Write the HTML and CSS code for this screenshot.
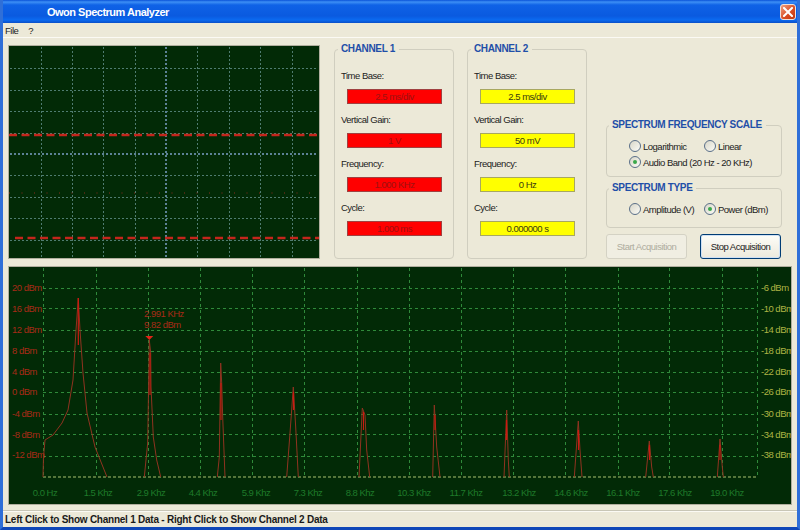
FILE: index.html
```html
<!DOCTYPE html>
<html lang="en">
<head>
    <meta charset="UTF-8">
    <title>Owon Spectrum Analyzer</title>
    <link rel="stylesheet" href="styles.css">
</head>
<body>
    <div class="window">
        <div class="titlebar">
            <span class="title">Owon Spectrum Analyzer</span>
            <div class="close-btn">
                <svg width="10" height="10" viewBox="0 0 10 10"><path d="M1 1 L9 9 M9 1 L1 9" stroke="#fff" stroke-width="2" stroke-linecap="square"/></svg>
            </div>
        </div>
        <div class="menubar"><span>File</span><span>?</span></div>

        <div class="main">
            <div class="top-row">
                <svg class="scope" width="312" height="214" viewBox="8 45 312 214">
                    <rect x="8" y="45" width="312" height="214" fill="#022a06"/>
                    <g class="scope-grid">
                        <path d="M41.500 47V257 M72.500 47V257 M103.500 47V257 M135.500 47V257 M197.500 47V257 M229.500 47V257 M260.500 47V257 M292.500 47V257"/>
                        <path d="M10 68.500H318 M10 90.500H318 M10 111.500H318 M10 133.500H318 M10 175.500H318 M10 197.500H318 M10 218.500H318 M10 240.500H318"/>
                    </g>
                    <path class="scope-axis" d="M166 47V257 M10 154H318"/>
                    <path class="trace" d="M9 135H318"/>
                    <path class="trace-dots" d="M9 193H318"/>
                    <path class="trace" d="M15 238H320"/>
                </svg>

                <div class="group channel">
                    <span class="legend">CHANNEL 1</span>
                    <div class="field"><label>Time Base:</label><div class="value red">2.5 ms/div</div></div>
                    <div class="field"><label>Vertical Gain:</label><div class="value red">1 V</div></div>
                    <div class="field"><label>Frequency:</label><div class="value red">1.000 KHz</div></div>
                    <div class="field"><label>Cycle:</label><div class="value red">1.000 ms</div></div>
                </div>

                <div class="group channel">
                    <span class="legend">CHANNEL 2</span>
                    <div class="field"><label>Time Base:</label><div class="value yellow">2.5 ms/div</div></div>
                    <div class="field"><label>Vertical Gain:</label><div class="value yellow">50 mV</div></div>
                    <div class="field"><label>Frequency:</label><div class="value yellow">0 Hz</div></div>
                    <div class="field"><label>Cycle:</label><div class="value yellow">0.000000 s</div></div>
                </div>

                <div class="side">
                    <div class="group options scale">
                        <span class="legend">SPECTRUM FREQUENCY SCALE</span>
                        <div class="opt"><i class="radio"></i>Logarithmic</div>
                        <div class="opt"><i class="radio"></i>Linear</div>
                        <div class="opt wide"><i class="radio on"></i>Audio Band (20 Hz - 20 KHz)</div>
                    </div>
                    <div class="group options type">
                        <span class="legend">SPECTRUM TYPE</span>
                        <div class="opt"><i class="radio"></i>Amplitude (V)</div>
                        <div class="opt"><i class="radio on"></i>Power (dBm)</div>
                    </div>
                    <div class="buttons">
                        <button disabled>Start Acquisition</button>
                        <button class="active">Stop Acquisition</button>
                    </div>
                </div>
            </div>

            <svg class="spectrum" width="784" height="239" viewBox="8 266 784 239">
                <rect x="8" y="266" width="784" height="239" fill="#022a06"/>
                <g class="spec-grid">
                    <path d="M43.500 268V477 M96.500 268V477 M148.500 268V477 M200.500 268V477 M252.500 268V477 M304.500 268V477 M357.500 268V477 M409.500 268V477 M461.500 268V477 M513.500 268V477 M565.500 268V477 M618.500 268V477 M669.500 268V477 M722.500 268V477 M757.500 268V477"/>
                    <path d="M43 288.500H757 M43 308.500H757 M43 330.500H757 M43 351.500H757 M43 372.500H757 M43 392.500H757 M43 414.500H757 M43 434.500H757 M43 456.500H757"/>
                </g>
                <path class="baseline" d="M43 477H757"/>

                <g class="peaks">
                    <path d="M43 477L43.500 457L45 440L53 435L62 423L68 410L73 380L76 330L78.300 298L80 330L83 373L87 413L95 447L107 477"/>
                    <path d="M144.300 477L147.700 443L149.300 340L150.700 353L151 387L153.300 437L156.700 460L160.700 477"/>
                    <path d="M217.300 477L219.300 457L220.700 363L221.700 383L222.700 417L225 477"/>
                    <path d="M286.700 477L290 433L293.300 387L295.700 427L298.300 477"/>
                    <path d="M359 477L362.300 408L365 415L366.700 450L369.700 477"/>
                    <path d="M432.700 477L434.300 405L436.700 447L440 477"/>
                    <path d="M504 477L506.700 410L508.300 460L509.300 477"/>
                    <path d="M574.300 477L578.300 421L580 450L582 477"/>
                    <path d="M645.700 477L649.300 441L651.700 467L653.300 477"/>
                    <path d="M717.300 477L720 439L722.300 467L723.300 477"/>
                </g>
                <g class="peak-cores">
                    <path d="M78.300 298V345"/>
                    <path d="M150 353V395"/>
                    <path d="M221 383V420"/>
                    <path d="M293.500 392V410"/>
                    <path d="M363.500 412V430"/>
                    <path d="M435 415V430"/>
                    <path d="M506.500 420V440"/>
                    <path d="M578.500 430V450"/>
                    <path d="M649.500 445V460"/>
                    <path d="M720 445V460"/>
                </g>
                <path class="marker" d="M145.300 336H153.300L149.300 340Z"/>
                <g class="marker-text">
                    <text x="144" y="317">2.991 KHz</text>
                    <text x="144" y="328">9.82 dBm</text>
                </g>

                <g class="left-scale">
                    <text x="12" y="291">20 dBm</text>
                    <text x="12" y="312">16 dBm</text>
                    <text x="12" y="333">12 dBm</text>
                    <text x="12" y="354">8 dBm</text>
                    <text x="12" y="375">4 dBm</text>
                    <text x="12" y="395">0 dBm</text>
                    <text x="12" y="417">-4 dBm</text>
                    <text x="12" y="438">-8 dBm</text>
                    <text x="12" y="458">-12 dBm</text>
                </g>
                <g class="right-scale">
                    <text x="761" y="291">-6 dBm</text>
                    <text x="761" y="312">-10 dBm</text>
                    <text x="761" y="333">-14 dBm</text>
                    <text x="761" y="354">-18 dBm</text>
                    <text x="761" y="375">-22 dBm</text>
                    <text x="761" y="395">-26 dBm</text>
                    <text x="761" y="417">-30 dBm</text>
                    <text x="761" y="438">-34 dBm</text>
                    <text x="761" y="458">-38 dBm</text>
                </g>
                <g class="freq-scale">
                    <text x="45" y="496">0.0 Hz</text>
                    <text x="98" y="496">1.5 Khz</text>
                    <text x="151" y="496">2.9 Khz</text>
                    <text x="203" y="496">4.4 Khz</text>
                    <text x="256" y="496">5.9 Khz</text>
                    <text x="308" y="496">7.3 Khz</text>
                    <text x="360" y="496">8.8 Khz</text>
                    <text x="414" y="496">10.3 Khz</text>
                    <text x="466" y="496">11.7 Khz</text>
                    <text x="519" y="496">13.2 Khz</text>
                    <text x="571" y="496">14.6 Khz</text>
                    <text x="623" y="496">16.1 Khz</text>
                    <text x="675" y="496">17.6 Khz</text>
                    <text x="727" y="496">19.0 Khz</text>
                </g>
            </svg>
        </div>

        <div class="statusbar">Left Click to Show Channel 1 Data - Right Click to Show Channel 2 Data</div>
    </div>
</body>
</html>
```

FILE: styles.css
```css
* {
    box-sizing: border-box;
}

body {
    margin: 0;
    font-family: 'Liberation Sans', Arial, sans-serif;
    font-size: 9.500px;
    letter-spacing: -0.5px;
    color: #222;
    background: #ece9d8;
}

.window {
    width: 800px;
    height: 530px;
    display: flex;
    flex-direction: column;
    overflow: hidden;
    background: #ece9d8;
    border-left: 3px solid #2f6fd8;
    border-right: 3px solid #2f6fd8;
    border-bottom: 3px solid #0f47b8;
}

.titlebar {
    height: 23px;
    margin: 0 -3px;
    padding: 0 4px 0 47px;
    flex: none;
    display: flex;
    align-items: center;
    justify-content: space-between;
    background: linear-gradient(to bottom, #0a52d8 0, #3d8ff5 2px, #0f62e6 5px, #0a5ae0 16px, #0b6af0 20px, #0a4fc8 23px);
}

.title {
    color: #fff;
    font-size: 11px;
    font-weight: bold;
    letter-spacing: -0.5px;
}

.close-btn {
    width: 16px;
    height: 16px;
    display: flex;
    align-items: center;
    justify-content: center;
    border: 1px solid #f0e0d8;
    border-radius: 3px;
    background: linear-gradient(135deg, #f0a080, #d84a20 60%, #c03810);
}

.menubar {
    height: 15px;
    flex: none;
    padding-left: 2px;
    display: flex;
    gap: 10px;
    align-items: center;
    border-bottom: 1px solid #fbfaf4;
}

.main {
    flex: 1;
    padding: 7px 5px 0;
}

.top-row {
    display: flex;
    height: 214px;
}

.scope {
    display: block;
    flex: none;
    outline: 1px solid #b0ae9e;
    outline-offset: -1px;
}

.scope-grid path {
    fill: none;
    stroke: #4f7c70;
    stroke-width: 1;
    stroke-dasharray: 2 2;
}

.scope-axis {
    fill: none;
    stroke: #5d8296;
    stroke-width: 2;
    stroke-dasharray: 2 2;
}

.trace {
    fill: none;
    stroke: #c4261c;
    stroke-width: 2.500;
    stroke-dasharray: 8 4.500;
}

.trace-dots {
    fill: none;
    stroke: #8c2a1c;
    stroke-width: 1;
    stroke-dasharray: 1 11.500;
}

.group {
    position: relative;
    border: 1px solid #d0cebf;
    border-radius: 4px;
}

.legend {
    position: absolute;
    top: -7px;
    left: 3px;
    padding: 0 4px 0 3px;
    background: #ece9d8;
    color: #1f4fa8;
    font-size: 10px;
    font-weight: bold;
    line-height: 12px;
    letter-spacing: -0.35px;
    white-space: nowrap;
}

.options .legend {
    left: 2px;
}

.channel {
    flex: none;
    width: 120px;
    height: 210px;
    margin: 4px 0 0 14px;
    padding: 19px 12px 0 6px;
}

.channel + .channel {
    margin-left: 13px;
}

.field {
    margin-bottom: 9px;
}

.field label {
    display: block;
    height: 13px;
    line-height: 13px;
    margin-bottom: 7px;
}

.value {
    width: 95px;
    height: 15px;
    margin-left: 6px;
    line-height: 13px;
    text-align: center;
    border: 1px solid #8c8a70;
}

.value.red {
    background: #ff0000;
    color: #a01010;
    border-color: #a04040;
}

.value.yellow {
    background: #ffff00;
    color: #3a3a10;
    border-color: #a8a860;
}

.side {
    flex: none;
    width: 176px;
    margin-left: 19px;
    display: flex;
    flex-direction: column;
    justify-content: flex-end;
}

.options {
    display: grid;
    grid-template-columns: 75px auto;
    grid-auto-rows: 16px;
    align-content: start;
    padding-left: 22px;
    padding-top: 12px;
}

.scale {
    height: 52px;
    margin-bottom: 11px;
}

.type {
    height: 40px;
}

.opt {
    display: flex;
    align-items: center;
    gap: 2px;
    white-space: nowrap;
}

.opt.wide {
    grid-column: span 2;
}

.radio {
    position: relative;
    width: 12px;
    height: 12px;
    flex: none;
    border: 1px solid #5a6f88;
    border-radius: 50%;
    background: linear-gradient(135deg, #d8d6c8, #fbfbf6);
}

.radio.on::after {
    content: "";
    position: absolute;
    top: 3px;
    left: 3px;
    width: 4px;
    height: 4px;
    border-radius: 50%;
    background: #3aa84a;
}

.buttons {
    display: flex;
    gap: 13px;
    margin-top: 6px;
}

button {
    width: 81px;
    height: 25px;
    padding: 0;
    font-family: inherit;
    font-size: 9.500px;
    letter-spacing: -0.5px;
    color: #222;
    border: 1px solid #003c74;
    border-radius: 3px;
    background: linear-gradient(to bottom, #fdfdf8, #ece9dc);
}

button.active {
    box-shadow: inset 0 0 0 1px #cfe0f4;
}

button:disabled {
    color: #aeac9e;
    border-color: #d4d2c4;
    background: #f0eee2;
}

.spectrum {
    display: block;
    margin-top: 7px;
    outline: 1px solid #b0ae9e;
    outline-offset: -1px;
}

.spec-grid path {
    fill: none;
    stroke: #2f8a3a;
    stroke-width: 1;
    stroke-dasharray: 3 3;
}

.baseline {
    fill: none;
    stroke: #a8c070;
    stroke-width: 1;
    stroke-dasharray: 3 2;
}

.peaks path {
    fill: none;
    stroke: #8f3320;
    stroke-width: 1;
}

.peak-cores path {
    fill: none;
    stroke: #cc1a10;
    stroke-width: 1.200;
}

.marker {
    fill: #e02418;
}

.spectrum text {
    font-size: 9.500px;
}

.marker-text text,
.left-scale text {
    fill: #a82a18;
}

.right-scale text {
    fill: #aeb444;
}

.freq-scale text {
    fill: #1f7a2a;
    text-anchor: middle;
}

.statusbar {
    height: 17px;
    flex: none;
    padding-left: 2px;
    line-height: 17px;
    font-size: 10px;
    font-weight: bold;
    letter-spacing: -0.24px;
    color: #1a1a1a;
    border-top: 1px solid #c8c6b6;
    box-shadow: inset 0 1px 0 #fbfaf4;
}
```
